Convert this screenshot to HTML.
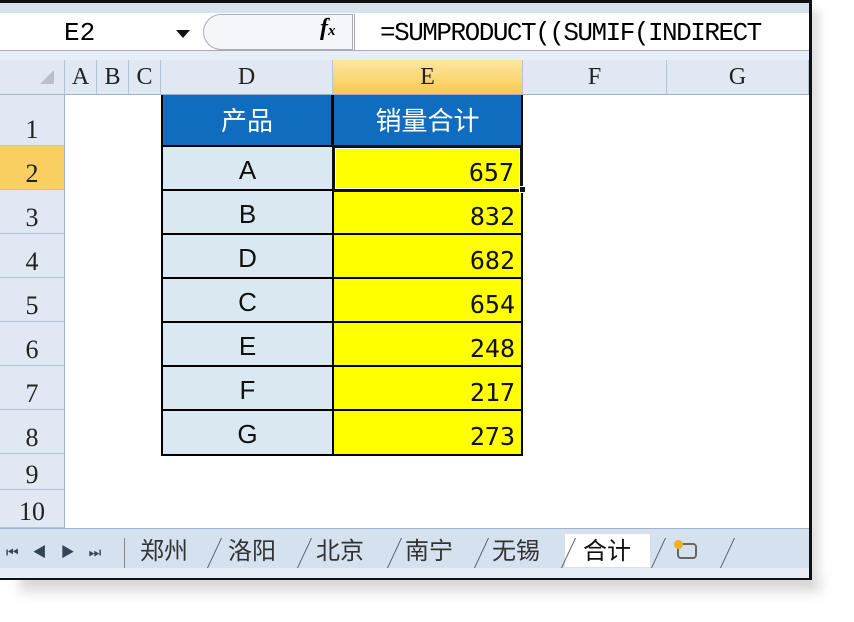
<!DOCTYPE html><html><head><meta charset="utf-8"><style>
body{margin:0;width:854px;height:622px;background:#fff;position:relative;overflow:hidden;font-family:"Liberation Sans","Noto Sans CJK SC",sans-serif}
.a{position:absolute;box-sizing:border-box}
.m{font-family:"Liberation Mono","DejaVu Sans Mono",monospace}
.ch{background:#dfe8f3;border-right:1px solid #b3c3d8;border-bottom:1px solid #9fb2c9;text-align:center;color:#222;font-family:"Liberation Serif",serif;font-size:24px;line-height:34px}
.rh{background:#dfe8f3;border-bottom:1px solid #b3c3d8;border-right:1px solid #9fb2c9;text-align:center;color:#222;font-family:"Liberation Serif",serif;font-size:26px}
.d{background:#dae9f1;border:2px solid #000;text-align:center;font-size:26px;color:#111}
.e{background:#ffff00;border:2px solid #000;text-align:right;padding-right:6px;font-family:"DejaVu Sans Mono",monospace;font-size:25px;color:#111}
.tab{font-size:24px;color:#333;top:537px;height:30px;line-height:30px}
.sl{position:absolute;top:538px;width:1px;height:30px;background:#556;transform:skewX(-25deg);transform-origin:bottom}
</style></head><body>
<div class="a" style="left:20px;top:575px;width:800px;height:22px;background:linear-gradient(#bbb,#fff);filter:blur(6px)"></div>
<div class="a" style="left:808px;top:10px;width:16px;height:575px;background:linear-gradient(90deg,#ccc,#fff);filter:blur(4px)"></div>
<div class="a" style="left:0;top:0;width:812px;height:580px;border:3px solid #111;border-left:0;background:#fff"></div>
<div class="a" style="left:0;top:3px;width:809px;height:10px;background:#d6e2ee"></div>
<div class="a" style="left:0;top:13px;width:809px;height:38px;background:#fff;border-bottom:1px solid #aab"></div>
<div class="a" style="left:0;top:51px;width:809px;height:9px;background:#e6eef7"></div>
<div class="a m" style="left:64px;top:16px;font-size:26px;line-height:34px">E2</div>
<div class="a" style="left:176px;top:30px;border-left:7px solid transparent;border-right:7px solid transparent;border-top:8px solid #111"></div>
<div class="a" style="left:203px;top:14px;width:150px;height:36px;border:1px solid #aab;border-radius:18px 0 0 18px;background:#f4f6f9"></div>
<div class="a" style="left:320px;top:15px;font-family:'Liberation Serif',serif;font-style:italic;font-weight:bold;font-size:24px">f<span style="font-size:15px">x</span></div>
<div class="a" style="left:354px;top:14px;width:1px;height:36px;background:#aab"></div>
<div class="a m" style="left:380px;top:16px;font-size:26px;line-height:34px;white-space:nowrap;letter-spacing:-1.5px">=SUMPRODUCT((SUMIF(INDIRECT</div>
<div class="a ch" style="left:0;top:60px;width:65px;height:35px"></div>
<div class="a" style="left:40px;top:70px;border-left:14px solid transparent;border-bottom:14px solid #b8c0cc"></div>
<div class="a ch" style="left:65px;top:60px;width:32px;height:35px">A</div>
<div class="a ch" style="left:97px;top:60px;width:32px;height:35px">B</div>
<div class="a ch" style="left:129px;top:60px;width:32px;height:35px">C</div>
<div class="a ch" style="left:161px;top:60px;width:172px;height:35px">D</div>
<div class="a ch" style="left:333px;top:60px;width:190px;height:35px;background:linear-gradient(#fde7a0,#f9c94f)">E</div>
<div class="a ch" style="left:523px;top:60px;width:144px;height:35px">F</div>
<div class="a ch" style="left:667px;top:60px;width:142px;height:35px">G</div>
<div class="a rh" style="left:0;top:95px;width:65px;height:51px;line-height:70px">1</div>
<div class="a rh" style="left:0;top:146px;width:65px;height:44px;line-height:56px;background:#f9cf62">2</div>
<div class="a rh" style="left:0;top:190px;width:65px;height:44px;line-height:56px">3</div>
<div class="a rh" style="left:0;top:234px;width:65px;height:44px;line-height:56px">4</div>
<div class="a rh" style="left:0;top:278px;width:65px;height:44px;line-height:56px">5</div>
<div class="a rh" style="left:0;top:322px;width:65px;height:44px;line-height:56px">6</div>
<div class="a rh" style="left:0;top:366px;width:65px;height:44px;line-height:56px">7</div>
<div class="a rh" style="left:0;top:410px;width:65px;height:44px;line-height:56px">8</div>
<div class="a rh" style="left:0;top:454px;width:65px;height:36px;line-height:42px">9</div>
<div class="a rh" style="left:0;top:490px;width:65px;height:38px;line-height:44px">10</div>
<div class="a" style="left:161px;top:95px;width:172px;height:52px;background:#0f6cbe;border:2px solid #000;border-top:0;color:#fff;font-size:26px;text-align:center;line-height:52px">产品</div>
<div class="a" style="left:332px;top:95px;width:191px;height:52px;background:#0f6cbe;border:2px solid #000;border-top:0;color:#fff;font-size:26px;text-align:center;line-height:52px">销量合计</div>
<div class="a d" style="left:161px;top:145px;width:173px;height:47px;line-height:46px">A</div>
<div class="a d" style="left:161px;top:189px;width:173px;height:47px;line-height:46px">B</div>
<div class="a d" style="left:161px;top:233px;width:173px;height:47px;line-height:46px">D</div>
<div class="a d" style="left:161px;top:277px;width:173px;height:47px;line-height:46px">C</div>
<div class="a d" style="left:161px;top:321px;width:173px;height:47px;line-height:46px">E</div>
<div class="a d" style="left:161px;top:365px;width:173px;height:47px;line-height:46px">F</div>
<div class="a d" style="left:161px;top:409px;width:173px;height:47px;line-height:46px">G</div>
<div class="a e" style="left:332px;top:189px;width:191px;height:47px;line-height:52px">832</div>
<div class="a e" style="left:332px;top:233px;width:191px;height:47px;line-height:52px">682</div>
<div class="a e" style="left:332px;top:277px;width:191px;height:47px;line-height:52px">654</div>
<div class="a e" style="left:332px;top:321px;width:191px;height:47px;line-height:52px">248</div>
<div class="a e" style="left:332px;top:365px;width:191px;height:47px;line-height:52px">217</div>
<div class="a e" style="left:332px;top:409px;width:191px;height:47px;line-height:52px">273</div>
<div class="a e" style="left:332px;top:145px;width:191px;height:47px;line-height:50px;border:3px solid #111;box-shadow:inset 0 0 0 1px #fff">657</div>
<div class="a" style="left:519px;top:186px;width:7px;height:7px;background:#111;border:1px solid #fff"></div>
<div class="a" style="left:0;top:528px;width:809px;height:40px;background:#d5e1ee;border-top:1px solid #9fb2c9"></div>
<div class="a" style="left:6px;top:542px;font-size:14px;color:#345;letter-spacing:14px">⏮◀▶⏭</div>
<div class="a" style="left:0;top:568px;width:809px;height:10px;background:#e5edf6"></div>
<div class="a" style="left:565px;top:534px;width:85px;height:33px;background:#fff"></div>
<div class="a tab" style="left:140px">郑州</div>
<div class="a tab" style="left:228px">洛阳</div>
<div class="a tab" style="left:316px">北京</div>
<div class="a tab" style="left:405px">南宁</div>
<div class="a tab" style="left:492px">无锡</div>
<div class="a tab" style="left:583px;color:#111">合计</div>
<div class="sl" style="left:207px"></div>
<div class="sl" style="left:297px"></div>
<div class="sl" style="left:387px"></div>
<div class="sl" style="left:474px"></div>
<div class="sl" style="left:561px"></div>
<div class="sl" style="left:651px"></div>
<div class="sl" style="left:720px"></div>
<div class="a" style="left:677px;top:543px;width:20px;height:16px;border:2px solid #666;border-radius:4px"></div>
<div class="a" style="left:674px;top:540px;width:9px;height:9px;background:#f0b020;border-radius:50%"></div>
<div class="a" style="left:124px;top:538px;width:1px;height:30px;background:#888"></div>
</body></html>
